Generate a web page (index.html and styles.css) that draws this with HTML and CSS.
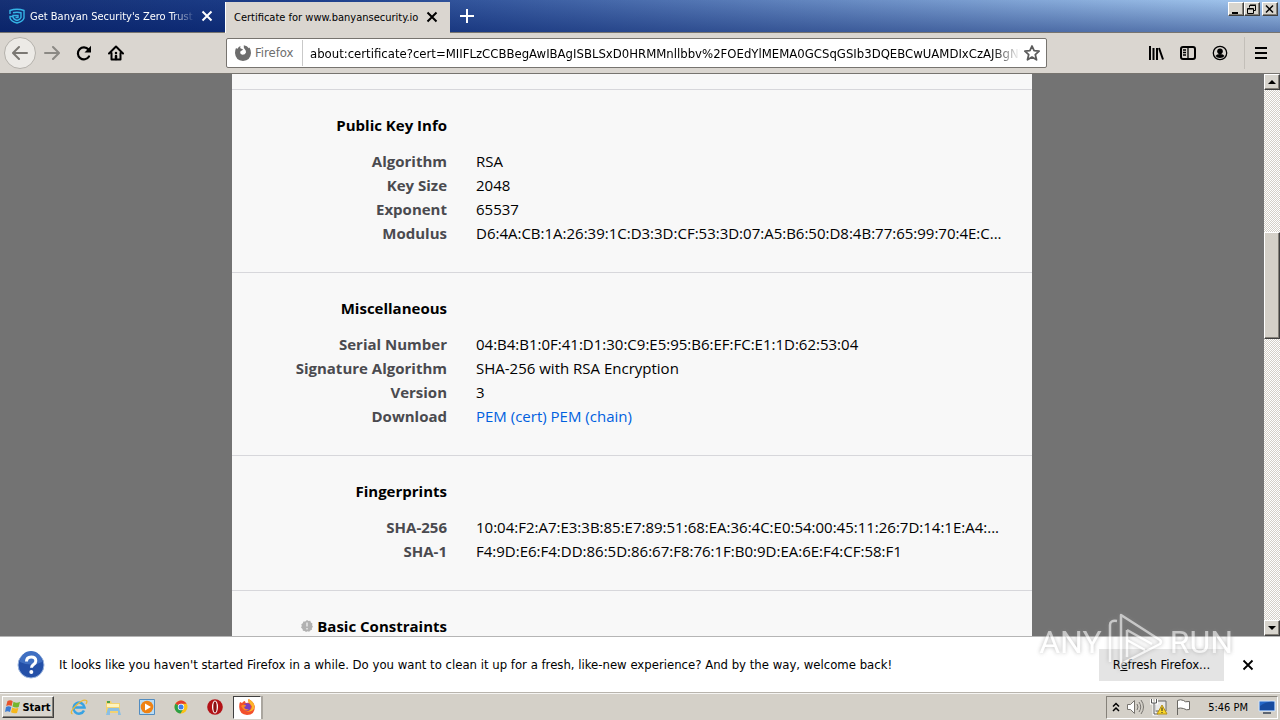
FILE: index.html
```
<!DOCTYPE html>
<html lang="en">
<head>
<meta charset="utf-8">
<title>Certificate for www.banyansecurity.io</title>
<link rel="stylesheet" href="styles.css">
</head>
<body>
<header class="tabbar">
  <div class="tab">
    <svg class="icon16" viewBox="0 0 16 16" fill="none" stroke="#35b4e6" stroke-width="1.4"><path d="M1 6V2.500q7-2.500 14 0V10q-1 3.500-7 5-6-1.500-7-5V8.500h3"/><path d="M4 4.800q4-1 8 0V9.500q-.8 2-4 3-3.500-1-4-3.500V7.500h5V9.500H6.500"/></svg>
    <span class="tab-title fade">Get Banyan Security's Zero Trust F</span>
    <button class="plain" aria-label="Close tab"><svg class="icon12" viewBox="0 0 12 12" stroke="currentColor" stroke-width="2" fill="none"><path d="M1.500 1.500l9 9M10.500 1.500l-9 9"/></svg></button>
  </div>
  <div class="tab active">
    <span class="tab-title">Certificate for www.banyansecurity.io</span>
    <button class="plain" aria-label="Close tab"><svg class="icon12" viewBox="0 0 12 12" stroke="currentColor" stroke-width="2" fill="none"><path d="M1.500 1.500l9 9M10.500 1.500l-9 9"/></svg></button>
  </div>
  <button class="plain newtab" aria-label="New tab"><svg class="icon16" viewBox="0 0 16 16" stroke="#fff" stroke-width="2" fill="none"><path d="M8 1v14M1 8h14"/></svg></button>
  <div class="winbuttons">
    <button class="bevel" aria-label="Minimize"><svg class="icon12" viewBox="0 0 12 12"><path d="M2 9h6v2H2z"/></svg></button>
    <button class="bevel" aria-label="Restore"><svg class="icon12" viewBox="0 0 12 12" fill="none" stroke="#000"><path d="M4 2h6M3.500 4.500V2.500h6v5H8M2 6h5M1.500 5.500h6v5h-6z"/></svg></button>
    <button class="bevel last" aria-label="Close"><svg class="icon12" viewBox="0 0 12 12" fill="none" stroke="#000" stroke-width="1.500"><path d="M2 2.500l7 7M9 2.500l-7 7"/></svg></button>
  </div>
</header>
<nav class="navbar">
  <div class="navgroup">
    <button class="plain back" aria-label="Back"><svg class="icon16" viewBox="0 0 16 16" fill="none" stroke="#7b7873" stroke-width="2" stroke-linecap="round" stroke-linejoin="round"><path d="M15 8H1.500M7 2L1 8l6 6"/></svg></button>
    <button class="plain" aria-label="Forward"><svg class="icon16" viewBox="0 0 16 16" fill="none" stroke="#8b8984" stroke-width="2" stroke-linecap="round" stroke-linejoin="round"><path d="M1 8h13.500M9 2l6 6-6 6"/></svg></button>
    <button class="plain" aria-label="Reload"><svg class="icon16" viewBox="0 0 16 16"><path d="M13 11.500A6 6 0 1 1 12.500 4.500" fill="none" stroke="#000" stroke-width="2.200" stroke-linecap="round"/><path d="M15 .8v6.700H8.500z"/></svg></button>
    <button class="plain" aria-label="Home"><svg class="icon16" viewBox="0 0 16 16" fill="none" stroke="#000" stroke-width="2" stroke-linecap="round" stroke-linejoin="round"><path d="M1 8.500L8 1.500l7 7M3.500 8v6.500h9V8"/><path d="M8 14v-3M8 8v.1" stroke-width="2.500"/></svg></button>
  </div>
  <div class="urlbar">
    <svg class="icon16" viewBox="0 0 16 16"><path d="M1 3q1 1 1.500.8Q3.500 1.500 5.500 1q-.7 1.500.2 2.600l2.300.6Q7.500 5.500 6 6q-.8.600-.8 1.300Q5 9.500 7.500 9.700q2.700 0 3.500-2.200.3-2-1.300-3.500Q8.500 3 8.800.2q3.500.5 5 3l.7-.7Q16 5 16 8q-.5 7.500-8 8Q.5 15.500 0 8q0-3 1-5z" fill="#6d6d6d"/></svg>
    <span class="identity">Firefox</span>
    <input class="url" aria-label="Address" value="about:certificate?cert=MIIFLzCCBBegAwIBAgISBLSxD0HRMMnllbbv%2FOEdYlMEMA0GCSqGSIb3DQEBCwUAMDIxCzAJBgNVBAYTAlVT">
    <button class="plain" aria-label="Bookmark this page"><svg class="icon16" viewBox="0 0 16 16" fill="none" stroke="#5b5b5b" stroke-width="1.800" stroke-linejoin="round"><path d="M8 1l2.100 4.700 5 .5-3.800 3.400 1.200 5.200L8 12.100l-4.500 2.700 1.200-5.200L.9 6.200l5-.5z"/></svg></button>
  </div>
  <div class="tools">
    <button class="plain" aria-label="Library"><svg class="icon16" viewBox="0 0 16 16" fill="none" stroke="#000" stroke-width="2"><path d="M2 1v14M5.500 3v12M9 3v12M11 3l4 11.500"/></svg></button>
    <button class="plain" aria-label="Sidebar"><svg class="icon16" viewBox="0 0 16 16" fill="none" stroke="#000" stroke-width="2"><rect x="1" y="2" width="14" height="12" rx="2"/><path d="M8 2v12M3 5h3M3 7.500h3M3 10h3" stroke-width="1.300"/></svg></button>
    <button class="plain" aria-label="Account"><svg class="icon16" viewBox="0 0 16 16"><circle cx="8" cy="8" r="6.700" fill="none" stroke="#000" stroke-width="1.300"/><circle cx="8" cy="6.200" r="2.800"/><path d="M3.500 11q1-2 4.500-2t4.500 2Q11 13 8 13t-4.500-2z"/></svg></button>
    <button class="plain menu" aria-label="Menu"><svg class="icon16" viewBox="0 0 16 16" stroke="#000" stroke-width="2"><path d="M2 3h12M2 8h12M2 13h12"/></svg></button>
  </div>
</nav>
<div class="viewport">
  <main class="page">
    <div class="card">
      <div class="previous"></div>
      <section class="group">
        <h2>Public Key Info</h2>
        <dl>
          <dt>Algorithm</dt><dd>RSA</dd>
          <dt>Key Size</dt><dd>2048</dd>
          <dt>Exponent</dt><dd>65537</dd>
          <dt>Modulus</dt><dd>D6:4A:CB:1A:26:39:1C:D3:3D:CF:53:3D:07:A5:B6:50:D8:4B:77:65:99:70:4E:C...</dd>
        </dl>
      </section>
      <section class="group">
        <h2>Miscellaneous</h2>
        <dl>
          <dt>Serial Number</dt><dd>04:B4:B1:0F:41:D1:30:C9:E5:95:B6:EF:FC:E1:1D:62:53:04</dd>
          <dt>Signature Algorithm</dt><dd>SHA-256 with RSA Encryption</dd>
          <dt>Version</dt><dd>3</dd>
          <dt>Download</dt><dd><a href="#cert">PEM (cert)</a> <a href="#chain">PEM (chain)</a></dd>
        </dl>
      </section>
      <section class="group">
        <h2>Fingerprints</h2>
        <dl>
          <dt>SHA-256</dt><dd>10:04:F2:A7:E3:3B:85:E7:89:51:68:EA:36:4C:E0:54:00:45:11:26:7D:14:1E:A4:...</dd>
          <dt>SHA-1</dt><dd>F4:9D:E6:F4:DD:86:5D:86:67:F8:76:1F:B0:9D:EA:6E:F4:CF:58:F1</dd>
        </dl>
      </section>
      <section class="group">
        <h2><svg class="icon12" viewBox="0 0 12 12"><path d="M6 0l1.500 1L9.300.8l.6 1.700 1.500.9-.3 1.800.9 1.500-1.100 1.200v1.800l-1.700.7-1 1.300-1.700-.4L5 12l-1.300-1.100-1.800-.2-.4-1.800L0 7.600l.8-1.700L.3 4.200l1.500-1 .6-1.800 1.800.1z" fill="#b1b1b1"/><path d="M6 2.500v4M6 8v1.500" stroke="#e8e8e8" stroke-width="1.500"/></svg>Basic Constraints</h2>
      </section>
    </div>
  </main>
  <div class="scrollbar">
    <button class="bevel" aria-label="Scroll up"><svg class="arrow" viewBox="0 0 8 4"><path d="M0 4l4-4 4 4z"/></svg></button>
    <div class="track"><div class="thumb"></div></div>
    <button class="bevel" aria-label="Scroll down"><svg class="arrow" viewBox="0 0 8 4"><path d="M0 0l4 4 4-4z"/></svg></button>
  </div>
</div>
<aside class="notice">
  <svg class="question" viewBox="0 0 28 28"><circle cx="14" cy="14" r="13" fill="#2450a8" stroke="#9db7df"/><path d="M3 11a11 11 0 0 1 22 0q-11 5-22 0z" fill="#3f6fc2"/><path d="M9.500 10.500q0-4.500 4.700-4.500t4.600 4q0 2-2.300 3.600-2 1.200-2 3.200" fill="none" stroke="#fff" stroke-width="3"/><circle cx="14.300" cy="21" r="2" fill="#fff"/></svg>
  <p>It looks like you haven't started Firefox in a while. Do you want to clean it up for a fresh, like-new experience? And by the way, welcome back!</p>
  <button class="refresh">R<u>e</u>fresh Firefox...</button>
  <button class="plain" aria-label="Dismiss"><svg class="icon12" viewBox="0 0 12 12" stroke="#000" stroke-width="1.800"><path d="M1.500 1.500l9 9M10.500 1.500l-9 9"/></svg></button>
</aside>
<footer class="taskbar">
  <button class="bevel start"><svg class="icon16" viewBox="0 0 16 16"><path d="M2.500 2q3-1.500 5.200.2L6.600 7Q4 5.500 1.200 7z" fill="#e8532a"/><path d="M8.500 2.800q3 1.700 6.500 0L13.700 8Q10.500 9.300 7.500 7.500z" fill="#74b62d"/><path d="M1 8q2.500-1.400 5.300 0L5 13Q2.500 11.500 0 13z" fill="#3c7cd3"/><path d="M7.200 8.500q3 1.700 6.200.5L12 14q-3 1-6-.7z" fill="#f6b81c"/></svg>Start</button>
  <div class="launch">
    <button class="plain" aria-label="Internet Explorer"><svg class="icon18" viewBox="0 0 18 18" fill="none"><path d="M14 12.500A5.500 5.500 0 1 1 14.500 9.500H5" stroke="#38a3e3" stroke-width="2.500"/><path d="M2.500 16Q-1 14.500 6 7.500T16.500 2.500q1 1-.5 3.500" stroke="#e9b93a" stroke-width="1.300"/></svg></button>
    <button class="plain" aria-label="Explorer"><svg class="icon18" viewBox="0 0 18 18"><path d="M2 3h5l1 2h8v10H2z" fill="#f2d272"/><path d="M3 6h12v3H3z" fill="#fff4bd"/><path d="M4 10h11l2 7h-3v-4H6v4H2z" fill="#8bbfe4"/><path d="M3 4h3" stroke="#4b9e48" stroke-width="2"/></svg></button>
    <button class="plain" aria-label="Media Player"><svg class="icon18" viewBox="0 0 18 18"><path d="M1.500 1.500h15v15h-15z" fill="#b9dcf5" stroke="#528cc0"/><circle cx="9" cy="9" r="6.300" fill="#ef8214"/><path d="M7 5.500v7L13 9z" fill="#fff"/></svg></button>
    <button class="plain" aria-label="Chrome"><svg class="icon18" viewBox="0 0 18 18"><circle cx="9" cy="9" r="6.500" fill="#fbc116"/><path d="M9 9L3.400 5.700A6.500 6.500 0 0 1 14.600 5.800H9z" fill="#e33b2e"/><path d="M9 9L3.400 5.700A6.500 6.500 0 0 0 8.500 15.500l3-5z" fill="#2c9f47"/><circle cx="9" cy="9" r="3.200" fill="#fff"/><circle cx="9" cy="9" r="2.500" fill="#3d7de8"/></svg></button>
    <button class="plain" aria-label="Opera"><svg class="icon18" viewBox="0 0 18 18"><circle cx="9" cy="9" r="7.800" fill="#b31217"/><ellipse cx="9" cy="9" rx="3" ry="6.400" fill="#fff"/><ellipse cx="9" cy="9" rx="1.700" ry="5.500" fill="#8c1014"/></svg></button>
    <button class="plain running" aria-label="Firefox"><svg class="icon18" viewBox="0 0 18 18"><path d="M2 4l2 1q1.500-2 3-2 0 1.500 1 2l3-.5Q9.500 3 10.500 1 16 3.500 16.800 8.500 17 17 9 17 1.500 16.500 1.200 9 1 6 2 4z" fill="#f3502c"/><path d="M10.500 1q-1 2 .5 3.500l3 4q-1 5-6 5 8 1 8.500-5Q16 3.500 10.500 1z" fill="#fdb62a"/><circle cx="9" cy="9" r="3.700" fill="#7a3fc0"/><path d="M3 8q2-2 5-1 0 2-2 2 1 3 5 2-3 3-6 0z" fill="#fa8a25"/></svg></button>
  </div>
  <div class="tray">
    <svg class="chev" viewBox="0 0 8 10" fill="none" stroke="#000" stroke-width="1.500"><path d="M1 4.500l3-3 3 3M1 9l3-3 3 3"/></svg>
    <svg class="icon18" viewBox="0 0 18 18" fill="#fff" stroke="#77746f"><path d="M1.500 6.500h3l4-4v13l-4-4h-3z"/><path d="M11 6q2 3 0 6M13 4q3.500 5 0 10M15 2q5 7 0 14" fill="none"/></svg>
    <svg class="icon18" viewBox="0 0 18 18"><path d="M5 3h11v10H5z" fill="#e9e9e9" stroke="#666"/><path d="M1.500 1v4h5V1M4 5v11h4" fill="none" stroke="#fff" stroke-width="3"/><path d="M1.500 1v4h5V1M4 5v11h4" fill="none" stroke="#555"/><path d="M12 7l5 9H7z" fill="#f9d728" stroke="#b58e16"/><path d="M12 9.500v3.500M12 14v1" stroke="#222"/></svg>
    <svg class="icon18" viewBox="0 0 18 18"><path d="M3.500 17V2.500q3-1.500 6 0 1 2 6 1v8q-3 1-6-1-3-1-6 0" fill="#fff" stroke="#696762"/></svg>
    <time>5:46 PM</time>
    <svg class="icon18" viewBox="0 0 18 18"><path d="M1 3h16v10H1z" fill="#2467c8" stroke="#d6e5f7"/><path d="M2 8Q9 3 16 4v8H2z" fill="#174b9f"/><path d="M5 15h8" stroke="#5e6570" stroke-width="2"/></svg>
  </div>
</footer>
<div class="watermark">
  <span>ANY</span>
  <svg viewBox="0 0 58 60" fill="none" stroke="#fff" stroke-width="2.500" stroke-linejoin="round"><path d="M3 50V13q0-5 7-4M14 58V3l39 25q2 2 0 4L14 52M20 18l25 14M20 28l18 10M20 18v27"/></svg>
  <span>RUN</span>
</div>
</body>
</html>
```
FILE: styles.css
```
* { box-sizing: border-box; }
body {
  margin: 0;
  height: 100vh;
  display: flex;
  flex-direction: column;
  overflow: hidden;
  font-family: "DejaVu Sans Condensed", "DejaVu Sans", sans-serif;
  font-size: 13px;
  color: #000;
}
button { font: inherit; color: inherit; padding: 0; border: 0; cursor: pointer; }
svg { flex: none; display: block; }
.icon12 { width: 12px; height: 12px; }
.icon16 { width: 16px; height: 16px; }
.icon18 { width: 18px; height: 18px; }
.plain { background: none; display: flex; align-items: center; justify-content: center; }
.bevel {
  display: flex;
  align-items: center;
  justify-content: center;
  background: #d8d5ce;
  border: 1px solid;
  border-color: #fff #404040 #404040 #fff;
  box-shadow: inset -1px -1px #858179;
}

.tabbar {
  flex: none;
  height: 33px;
  display: flex;
  align-items: stretch;
  background: linear-gradient(180deg, rgba(166, 202, 240, 0.08), rgba(10, 36, 106, 0.45)), linear-gradient(90deg, #0a246a, #123484 25%, #a6caf0);
  border-bottom: 1px solid #77746f;
}
.tab {
  width: 225px;
  display: flex;
  align-items: center;
  gap: 5px;
  padding: 0 12px 0 9px;
  color: #fff;
  font-size: 11px;
}
.tab-title { flex: 1; white-space: nowrap; overflow: hidden; }
.fade { mask-image: linear-gradient(90deg, #000 85%, transparent); }
.active { background: #dad6d0; color: #000; margin: 2px 0 -1px; padding: 0 12px 1px 8px; border-left: 1px solid #fff; }
.newtab { width: 34px; }
.winbuttons { margin-left: auto; display: flex; padding: 2px 2px 0 0; }
.winbuttons .bevel { width: 16px; height: 14px; }
.winbuttons .last { margin-left: 2px; }

.navbar {
  flex: none;
  height: 41px;
  display: flex;
  align-items: center;
  background: #dad6d0;
  border-bottom: 1px solid #77746f;
}
.navgroup { width: 226px; display: flex; padding-left: 4px; }
.navgroup .plain { width: 32px; height: 32px; }
.navgroup .back { background: #eceae6; border: 1px solid #b4b1ab; border-radius: 50%; }
.urlbar {
  flex: 1;
  min-width: 0;
  height: 30px;
  display: flex;
  align-items: center;
  gap: 4px;
  padding: 0 6px 0 8px;
  background: #fff;
  border: 1px solid #77746f;
  border-radius: 2px;
}
.identity { width: 48px; color: #6d6d6d; border-right: 1px solid #c9c9c9; line-height: 26px; }
.url {
  flex: 1;
  min-width: 0;
  border: 0;
  outline: 0;
  padding: 0 0 0 3px;
  background: none;
  font: inherit;
  mask-image: linear-gradient(90deg, #000 96%, transparent);
}
.tools { width: 233px; display: flex; justify-content: flex-end; align-items: center; padding-right: 3px; }
.tools .plain { width: 32px; height: 32px; }
.tools .menu { border-left: 1px solid #c3bfb9; width: 33px; margin-left: 8px; }

.viewport { flex: 1; min-height: 0; display: flex; }
.page { flex: 1; min-width: 0; overflow: hidden; background: #737373; }
.card { max-width: 800px; margin: 0 auto; background: #f8f8f8; }
.previous { height: 15px; }
.group {
  border-top: 1px solid #d7d7db;
  padding: 23px 32px 27px;
  font-family: "Open Sans", "Noto Sans", sans-serif;
  font-size: 15px;
  line-height: 24px;
}
.group h2 {
  width: 183px;
  margin: 0 0 12px;
  display: flex;
  align-items: center;
  justify-content: flex-end;
  gap: 4px;
  font-size: 15px;
  font-weight: 700;
  white-space: nowrap;
}
.group dl { margin: 0; display: grid; grid-template-columns: 183px 1fr; column-gap: 29px; }
.group dt { text-align: right; font-weight: 700; color: #4a4a4f; white-space: nowrap; }
.group dd { margin: 0; white-space: nowrap; }
.group a { color: #0060df; text-decoration: none; }

.scrollbar { width: 16px; display: flex; flex-direction: column; }
.scrollbar .bevel { height: 16px; }
.arrow { width: 8px; height: 4px; }
.track {
  flex: 1;
  padding-top: 142px;
  background: repeating-conic-gradient(#d4d0c8 0 25%, #fff 0 50%) 0 0 / 2px 2px;
}
.thumb {
  height: 107px;
  background: #d4d0c8;
  border: 1px solid;
  border-color: #fff #404040 #404040 #fff;
  box-shadow: inset -1px -1px #858179;
}

.notice {
  flex: none;
  height: 56px;
  display: flex;
  align-items: center;
  padding: 0 26px 0 17px;
  background: #fff;
  border-top: 1px solid #b5b5b5;
}
.question { width: 28px; height: 28px; margin-right: 14px; }
.notice p { flex: 1; margin: 0; white-space: nowrap; }
.refresh { width: 125px; height: 32px; background: #e4e4e4; margin-right: 18px; }

.taskbar {
  flex: none;
  height: 28px;
  display: flex;
  align-items: center;
  padding: 2px 2px 1px;
  background: #d4d0c8;
  border-top: 1px solid #b8b4ad;
  box-shadow: inset 0 1px #f5f4f2;
  font-size: 11px;
}
.start { width: 52px; height: 22px; gap: 1px; font-weight: 700; }
.launch { display: flex; gap: 2px; margin-left: 9px; }
.launch .plain { width: 32px; height: 23px; }
.launch .running { background: #fff; border: 1px solid; border-color: #404040 #fff #fff #404040; box-shadow: 2px 0 #aaa69f; width: 28px; }
.tray {
  margin-left: auto;
  height: 23px;
  display: flex;
  align-items: center;
  gap: 6px;
  padding: 0 1px 0 5px;
  border: 1px solid;
  border-color: #858179 #fff #fff #858179;
}
.tray time { margin: 0 4px 0 10px; }
.chev { width: 8px; height: 10px; }

.watermark {
  position: absolute;
  right: 47px;
  bottom: 48px;
  display: flex;
  align-items: center;
  gap: 5px;
  color: #fff;
  font: 32px "Roboto", sans-serif;
  opacity: 0.6;
  filter: drop-shadow(0 0 2px #888);
  pointer-events: none;
}
.watermark svg { width: 58px; height: 60px; }
```
